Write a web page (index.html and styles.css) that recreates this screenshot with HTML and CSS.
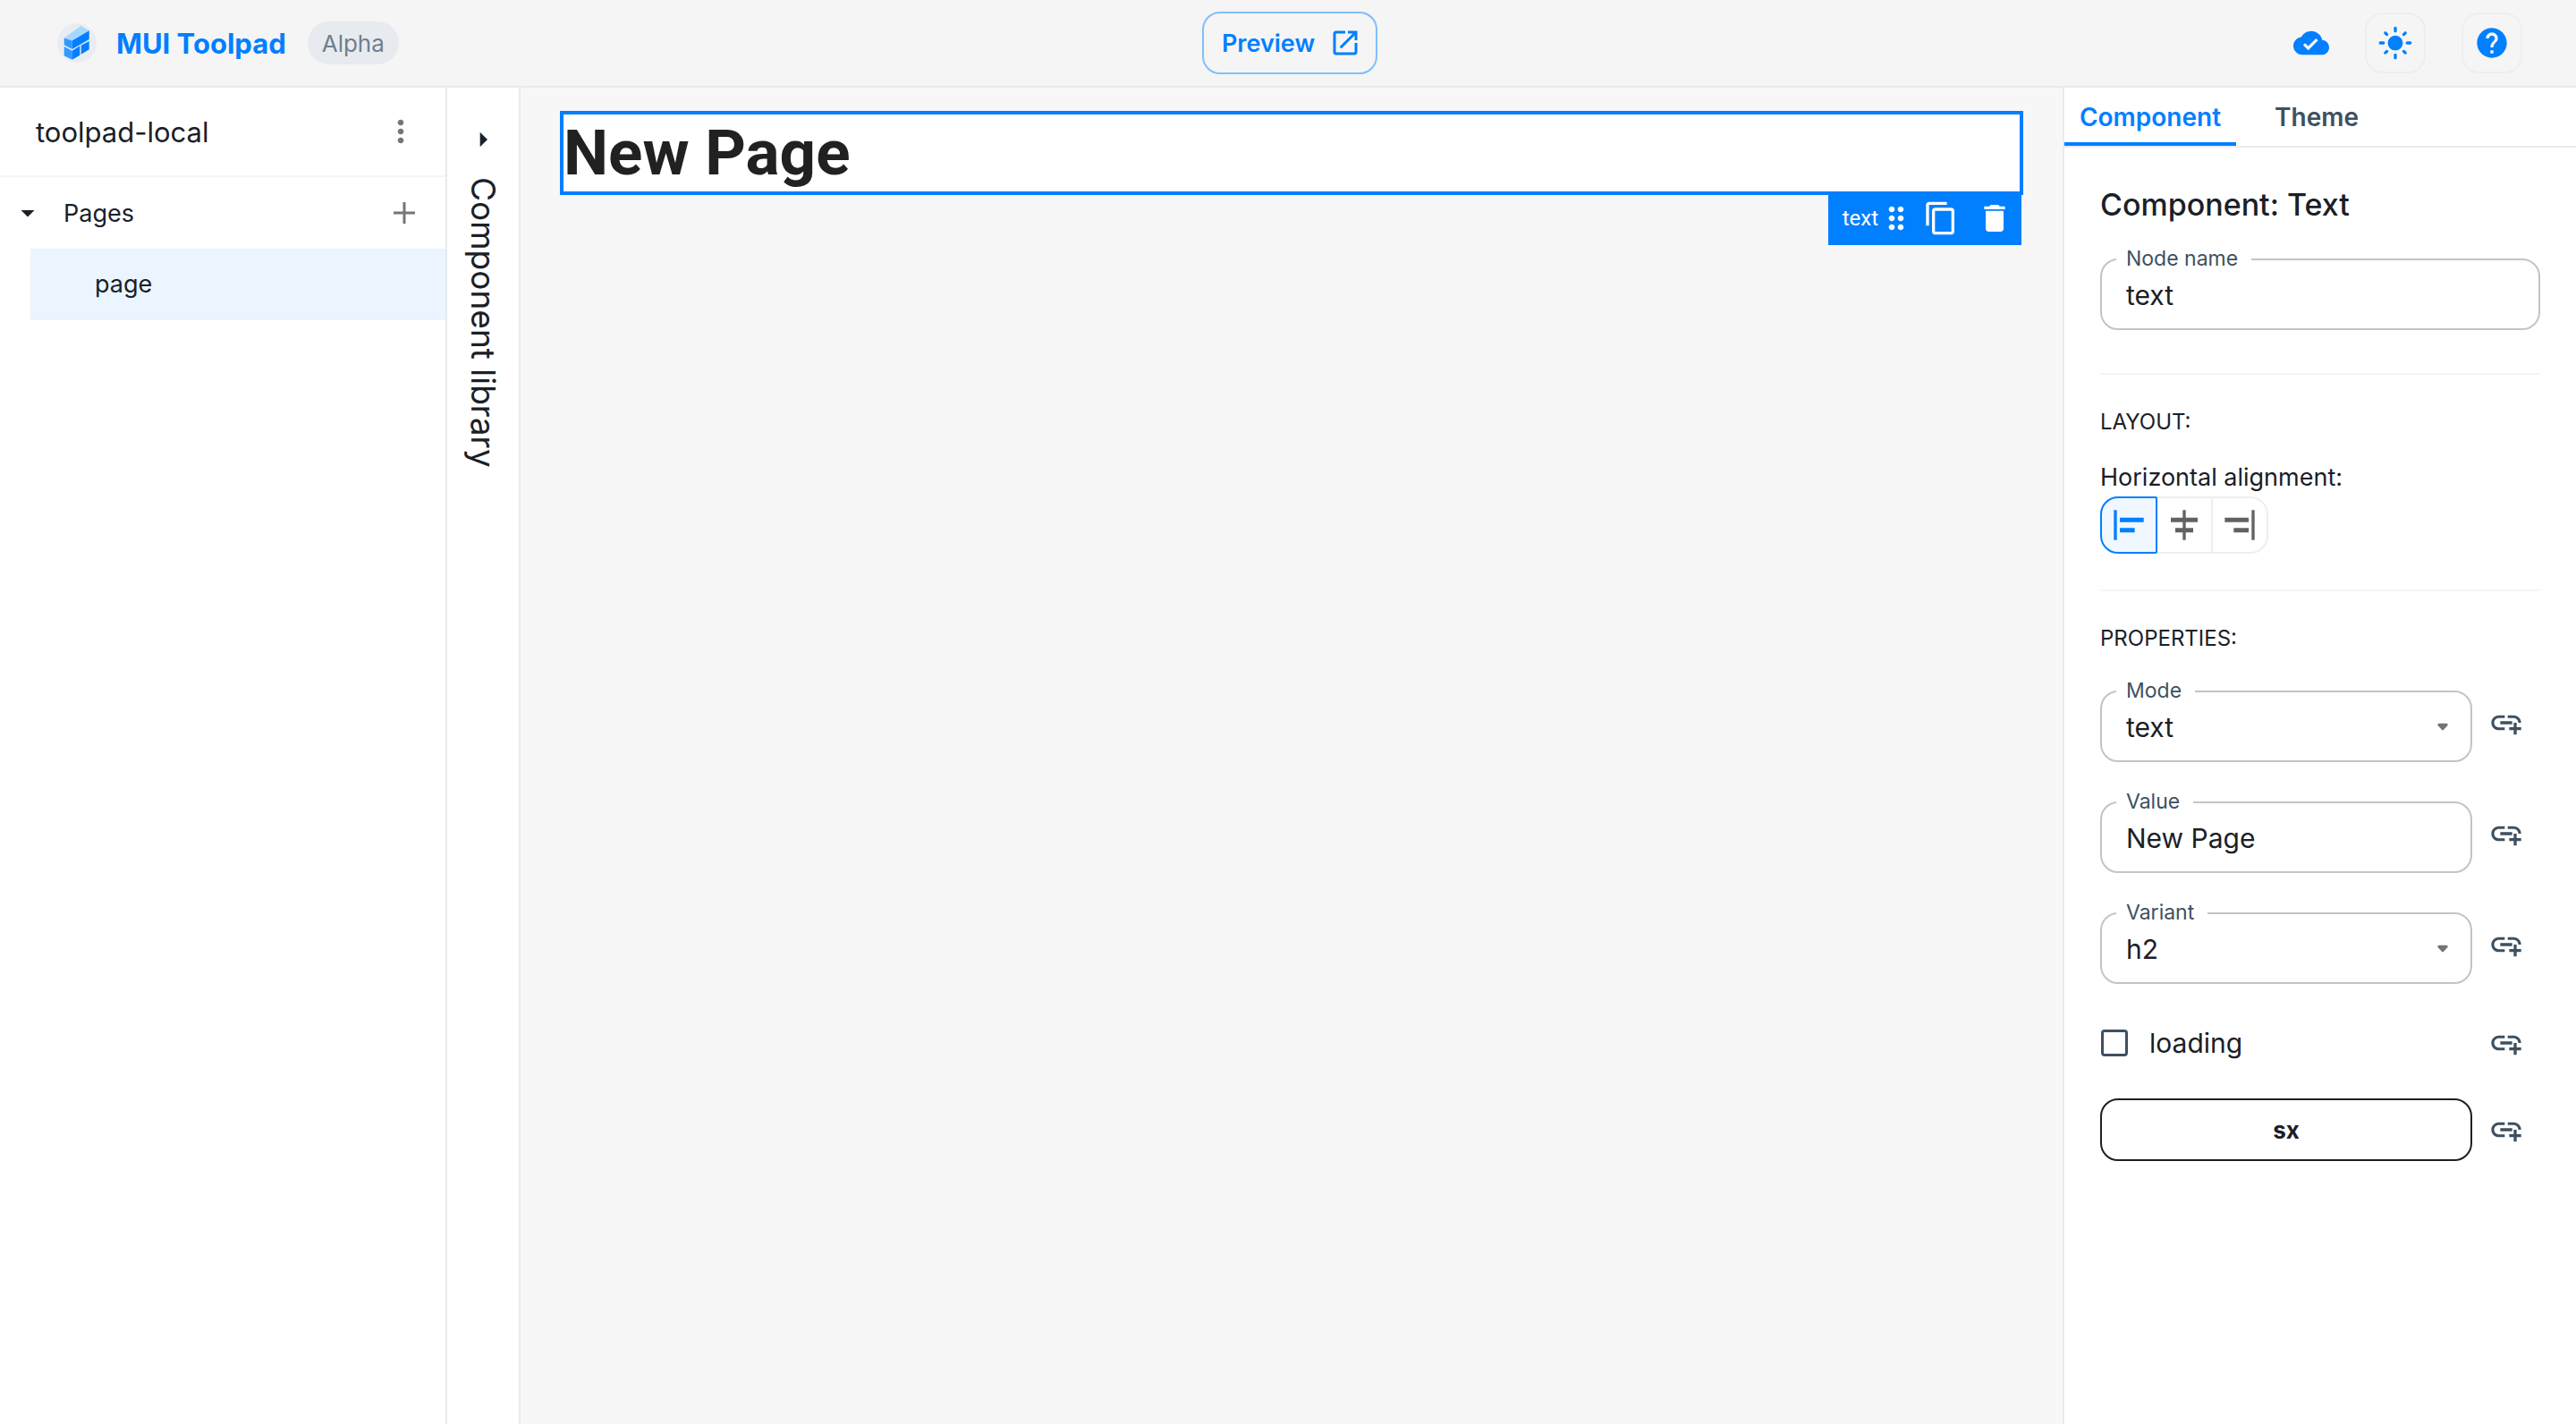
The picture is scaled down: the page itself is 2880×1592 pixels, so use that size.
FILE: index.html
```html
<!DOCTYPE html>
<html lang="en">
<head>
<meta charset="utf-8">
<title>MUI Toolpad</title>
<link rel="stylesheet" href="styles.css">
</head>
<body>
<svg class="sprite" aria-hidden="true">
  <symbol id="add-link" viewBox="0 0 24 24"><path d="M8 11h8v2H8v-2zm12.1 1H22c0-2.76-2.24-5-5-5h-4v1.9h4c1.71 0 3.1 1.39 3.1 3.1zM3.9 12c0-1.71 1.39-3.1 3.1-3.1h4V7H7c-2.76 0-5 2.24-5 5s2.24 5 5 5h4v-1.9H7c-1.71 0-3.1-1.39-3.1-3.1zM19 12h-2v3h-3v2h3v3h2v-3h3v-2h-3v-3z"/></symbol>
</svg>
<header class="topbar">
  <div class="brand">
    <svg class="logo" viewBox="0 0 44 44" aria-hidden="true">
      <circle cx="22" cy="22" r="22" fill="#e9edf3"/>
      <path d="M7.700 16.500 26.300 3l9.400 5.200-19 11.300z" fill="#a5d8ff"/>
      <path d="M7.700 16.500l9 3V29l-9-4.700zM7.700 26l9 4.700v10l-9-4.400z" fill="#3399ff"/>
      <path d="M16.700 19.500l19-11.300V18l-19 11zM16.700 30.700l8.600-5.400v10.400l-8.600 5zM26.700 24.700l9-4.700v9.300l-9 5.400z" fill="#007fff"/>
    </svg>
    <span class="brand-name">MUI Toolpad</span>
    <span class="chip">Alpha</span>
  </div>
  <button class="preview" type="button">Preview
    <svg class="icon-md" viewBox="0 0 24 24"><path d="M19 19H5V5h7V3H5c-1.11 0-2 .9-2 2v14c0 1.1.89 2 2 2h14c1.1 0 2-.9 2-2v-7h-2v7zM14 3v2h3.59l-9.83 9.83 1.41 1.41L19 6.41V10h2V3h-7z"/></svg>
  </button>
  <div class="actions">
    <svg class="icon" viewBox="0 0 24 24"><path d="M19.35 10.04C18.67 6.59 15.64 4 12 4 9.11 4 6.6 5.64 5.35 8.04 2.34 8.36 0 10.91 0 14c0 3.31 2.69 6 6 6h13c2.76 0 5-2.24 5-5 0-2.64-2.05-4.78-4.65-4.96zM10 17l-3.5-3.5 1.41-1.41L10 14.17 15.18 9l1.41 1.41L10 17z"/></svg>
    <button class="square" type="button" aria-label="Toggle theme"><svg class="icon" viewBox="0 0 24 24"><path d="M12 7c-2.76 0-5 2.24-5 5s2.24 5 5 5 5-2.24 5-5-2.24-5-5-5zM2 13h2c.55 0 1-.45 1-1s-.45-1-1-1H2c-.55 0-1 .45-1 1s.45 1 1 1zm18 0h2c.55 0 1-.45 1-1s-.45-1-1-1h-2c-.55 0-1 .45-1 1s.45 1 1 1zM11 2v2c0 .55.45 1 1 1s1-.45 1-1V2c0-.55-.45-1-1-1s-1 .45-1 1zm0 18v2c0 .55.45 1 1 1s1-.45 1-1v-2c0-.55-.45-1-1-1s-1 .45-1 1zM5.99 4.58a.996.996 0 0 0-1.41 0 .996.996 0 0 0 0 1.41l1.06 1.06c.39.39 1.03.39 1.41 0s.39-1.03 0-1.41L5.99 4.58zm12.37 12.37a.996.996 0 0 0-1.41 0 .996.996 0 0 0 0 1.41l1.06 1.06c.39.39 1.03.39 1.41 0a.996.996 0 0 0 0-1.41l-1.06-1.06zm1.06-10.96a.996.996 0 0 0 0-1.41.996.996 0 0 0-1.41 0l-1.06 1.06c-.39.39-.39 1.03 0 1.41s1.03.39 1.41 0l1.06-1.06zM7.05 18.36a.996.996 0 0 0 0-1.41.996.996 0 0 0-1.41 0l-1.06 1.06c-.39.39-.39 1.03 0 1.41s1.03.39 1.41 0l1.06-1.06z"/></svg></button>
    <button class="square" type="button" aria-label="Help"><svg class="icon" viewBox="0 0 24 24"><path d="M12 2C6.48 2 2 6.48 2 12s4.48 10 10 10 10-4.48 10-10S17.52 2 12 2zm1 17h-2v-2h2v2zm2.07-7.75-.9.92C13.45 12.9 13 13.5 13 15h-2v-.5c0-1.1.45-2.1 1.17-2.83l1.24-1.26c.37-.36.59-.86.59-1.41 0-1.1-.9-2-2-2s-2 .9-2 2H8c0-2.21 1.79-4 4-4s4 1.79 4 4c0 .88-.36 1.68-.93 2.25z"/></svg></button>
  </div>
</header>
<div class="workspace">
  <nav class="sidebar">
    <div class="app-row">
      <span class="app-name">toolpad-local</span>
      <button class="bare" type="button" aria-label="App menu"><svg class="icon" viewBox="0 0 24 24"><path d="M12 8c1.1 0 2-.9 2-2s-.9-2-2-2-2 .9-2 2 .9 2 2 2zm0 2c-1.1 0-2 .9-2 2s.9 2 2 2 2-.9 2-2-.9-2-2-2zm0 6c-1.1 0-2 .9-2 2s.9 2 2 2 2-.9 2-2-.9-2-2-2z"/></svg></button>
    </div>
    <div class="tree-row">
      <svg class="icon-md dark" viewBox="0 0 24 24"><path d="m7 10 5 5 5-5z"/></svg>
      <span class="tree-label">Pages</span>
      <button class="bare" type="button" aria-label="Create page"><svg class="icon-md" viewBox="0 0 24 24"><path d="M20 13h-7v7h-2v-7H4v-2h7V4h2v7h7v2z"/></svg></button>
    </div>
    <a class="tree-item" href="#page">page</a>
  </nav>
  <aside class="library">
    <button class="bare dark" type="button" aria-label="Expand component library"><svg class="icon" viewBox="0 0 24 24"><path d="m10 17 5-5-5-5v10z"/></svg></button>
    <span class="library-title">Component library</span>
  </aside>
  <main class="canvas">
    <div class="node">
      <h2 class="node-text">New Page</h2>
      <div class="hud">
        <span class="hud-name">text</span>
        <svg class="icon" viewBox="0 0 24 24"><path d="M11 18c0 1.1-.9 2-2 2s-2-.9-2-2 .9-2 2-2 2 .9 2 2zm-2-8c-1.1 0-2 .9-2 2s.9 2 2 2 2-.9 2-2-.9-2-2-2zm0-6c-1.1 0-2 .9-2 2s.9 2 2 2 2-.9 2-2-.9-2-2-2zm6 4c1.1 0 2-.9 2-2s-.9-2-2-2-2 .9-2 2 .9 2 2 2zm0 2c-1.1 0-2 .9-2 2s.9 2 2 2 2-.9 2-2-.9-2-2-2zm0 6c-1.1 0-2 .9-2 2s.9 2 2 2 2-.9 2-2-.9-2-2-2z"/></svg>
        <button class="hud-button" type="button" aria-label="Duplicate"><svg class="icon" viewBox="0 0 24 24"><path d="M16 1H4c-1.1 0-2 .9-2 2v14h2V3h12V1zm3 4H8c-1.1 0-2 .9-2 2v14c0 1.1.9 2 2 2h11c1.1 0 2-.9 2-2V7c0-1.1-.9-2-2-2zm0 16H8V7h11v14z"/></svg></button>
        <button class="hud-button" type="button" aria-label="Delete"><svg class="icon" viewBox="0 0 24 24"><path d="M6 19c0 1.1.9 2 2 2h8c1.1 0 2-.9 2-2V7H6v12zM19 4h-3.500l-1-1h-5l-1 1H5v2h14V4z"/></svg></button>
      </div>
    </div>
  </main>
  <aside class="panel">
    <div class="tabs" role="tablist">
      <button class="tab active" type="button" role="tab" aria-selected="true">Component</button>
      <button class="tab" type="button" role="tab" aria-selected="false">Theme</button>
    </div>
    <div class="panel-body">
      <h1 class="panel-title">Component: Text</h1>
      <div class="field">
        <label for="node-name">Node name</label>
        <input id="node-name" type="text" value="text">
      </div>
      <hr>
      <h3 class="overline">LAYOUT:</h3>
      <div class="align-label">Horizontal alignment:</div>
      <div class="toggle-group">
        <button class="toggle selected" type="button" aria-label="Start"><svg class="icon" viewBox="0 0 24 24"><path d="M4 22H2V2h2v20zM22 7H6v3h16V7zm-6 7H6v3h10v-3z"/></svg></button>
        <button class="toggle" type="button" aria-label="Center"><svg class="icon" viewBox="0 0 24 24"><path d="M11 2h2v5h8v3h-8v4h5v3h-5v5h-2v-5H6v-3h5v-4H3V7h8z"/></svg></button>
        <button class="toggle" type="button" aria-label="End"><svg class="icon" viewBox="0 0 24 24"><path d="M20 2h2v20h-2V2zM2 10h16V7H2v3zm6 7h10v-3H8v3z"/></svg></button>
      </div>
      <hr>
      <h3 class="overline">PROPERTIES:</h3>
      <div class="props">
        <div class="prop">
          <div class="field">
            <label for="mode">Mode</label>
            <select id="mode"><option>text</option></select>
            <svg class="arrow" viewBox="0 0 24 24"><path d="M9.200 10.900h5.600L12 13.900z"/></svg>
          </div>
          <button class="bind" type="button" aria-label="Bind mode"><svg class="icon"><use href="#add-link"/></svg></button>
        </div>
        <div class="prop">
          <div class="field">
            <label for="value">Value</label>
            <input id="value" type="text" value="New Page">
          </div>
          <button class="bind" type="button" aria-label="Bind value"><svg class="icon"><use href="#add-link"/></svg></button>
        </div>
        <div class="prop">
          <div class="field">
            <label for="variant">Variant</label>
            <select id="variant"><option>h2</option></select>
            <svg class="arrow" viewBox="0 0 24 24"><path d="M9.200 10.900h5.600L12 13.900z"/></svg>
          </div>
          <button class="bind" type="button" aria-label="Bind variant"><svg class="icon"><use href="#add-link"/></svg></button>
        </div>
        <div class="prop plain">
          <label class="check"><input type="checkbox">loading</label>
          <button class="bind" type="button" aria-label="Bind loading"><svg class="icon"><use href="#add-link"/></svg></button>
        </div>
        <div class="prop plain">
          <button class="sx" type="button">sx</button>
          <button class="bind" type="button" aria-label="Bind sx"><svg class="icon"><use href="#add-link"/></svg></button>
        </div>
      </div>
    </div>
  </aside>
</div>
</body>
</html>
```
FILE: styles.css
```css
* { box-sizing: border-box; }
body {
  margin: 0;
  min-height: 100vh;
  display: flex;
  flex-direction: column;
  font-family: Inter, "Liberation Sans", sans-serif;
  font-size: 31px;
  color: #1a2027;
  background: #fff;
}
button, input, select { font: inherit; color: inherit; }
button {
  margin: 0;
  padding: 0;
  border: 0;
  background: none;
  display: flex;
  align-items: center;
  justify-content: center;
}
svg { display: block; flex: none; fill: currentColor; }
.sprite { position: absolute; width: 0; height: 0; }
.icon { width: 40px; height: 40px; }
.icon-md { width: 36px; height: 36px; }

.topbar {
  display: grid;
  grid-template-columns: 1fr auto 1fr;
  align-items: center;
  height: 98px;
  padding: 0 60px 0 64px;
  background: #f5f5f5;
  border-bottom: 2px solid #e7ebf0;
  color: #007fff;
}
.brand { display: flex; align-items: center; }
.logo { width: 44px; height: 44px; margin-right: 22px; }
.brand-name { font-weight: 700; margin-right: 24px; }
.chip {
  height: 48px;
  line-height: 50px;
  padding: 0 16px;
  border-radius: 24px;
  background: #e7ebf0;
  color: #6f7e8c;
  font-size: 26px;
}
.preview {
  height: 70px;
  padding: 0 16px 0 20px;
  gap: 16px;
  border: 2px solid #80bfff;
  border-radius: 20px;
  font-size: 27px;
  font-weight: 600;
}
.actions { display: flex; align-items: center; justify-content: flex-end; gap: 40px; }
.square { width: 68px; height: 68px; border: 2px solid #eee; border-radius: 20px; }
.actions .square + .square { margin-left: 0; }

.workspace { flex: 1; display: flex; }
.sidebar { width: 500px; flex: none; border-right: 2px solid #e7ebf0; }
.app-row {
  display: flex;
  align-items: center;
  justify-content: space-between;
  height: 100px;
  padding: 0 30px 0 40px;
  border-bottom: 2px solid #f5f5f5;
}
.bare { color: #757575; }
.dark { color: #1a2027; }
.tree-row {
  display: flex;
  align-items: center;
  height: 80px;
  padding: 0 28px 0 13px;
  font-size: 27px;
}
.tree-label { flex: 1; margin-left: 22px; }
.tree-item {
  display: block;
  height: 80px;
  line-height: 80px;
  margin-left: 34px;
  padding-left: 72px;
  background: #ebf5ff;
  font-size: 27px;
  color: inherit;
  text-decoration: none;
}

.library {
  width: 82px;
  flex: none;
  display: flex;
  flex-direction: column;
  align-items: center;
  padding-top: 38px;
  gap: 22px;
  border-right: 2px solid #e7ebf0;
}
.library-title { writing-mode: vertical-rl; font-size: 37px; line-height: 48px; }

.canvas { flex: 1; padding: 26px 44px; background: #f7f7f7; }
.node { position: relative; border: 4px solid #007fff; background: #fff; }
.node-text {
  margin: 0;
  font: 700 71px/86px Roboto, sans-serif;
  color: #212121;
}
.hud {
  position: absolute;
  right: -2px;
  top: 86px;
  height: 60px;
  display: flex;
  align-items: center;
  padding: 0 10px 0 16px;
  background: #007fff;
  color: #fff;
}
.hud-name { font-size: 24px; line-height: 32px; font-family: Roboto, sans-serif; }
.hud-button { margin-left: 10px; }
.hud-button + .hud-button { margin-left: 20px; }

.panel { width: 574px; flex: none; border-left: 2px solid #e7ebf0; }
.tabs { display: flex; height: 67px; border-bottom: 2px solid #e7ebf0; }
.tab {
  min-width: 180px;
  height: 65px;
  padding: 4px 16px 0;
  border-bottom: 4px solid transparent;
  font-size: 28px;
  font-weight: 600;
  color: #3e5060;
}
.tab.active { min-width: 192px; color: #007fff; border-color: #007fff; }
.panel-body { padding: 40px; }
.panel-title { margin: 0 0 36px; font-size: 34px; font-weight: 500; line-height: 48px; }
.field {
  position: relative;
  flex: 1;
  height: 80px;
  border: 2px solid #c4c4c4;
  border-radius: 20px;
}
.field label {
  position: absolute;
  left: 16px;
  top: -16px;
  padding: 0 15px 0 11px;
  background: #fff;
  color: #3e5060;
  font-size: 23px;
  line-height: 28px;
}
.field input, .field select {
  width: 100%;
  height: 76px;
  margin: 0;
  padding: 2px 27px 0;
  border: 0;
  background: none;
  appearance: none;
  outline: 0;
  font-size: 30px;
}
.arrow {
  position: absolute;
  right: 13px;
  top: 20px;
  width: 36px;
  height: 36px;
  fill: #757575;
  stroke: #757575;
  stroke-width: 2;
  stroke-linejoin: round;
  pointer-events: none;
}
hr { margin: 0; border: 0; border-top: 2px solid #f5f5f5; }
.field + hr { margin-top: 48px; }
.overline { margin: 37px 0 0; font-size: 24px; font-weight: 400; line-height: 32px; }
.align-label { margin: 28px 0 3px; font-size: 27px; line-height: 36px; }
.toggle-group { display: flex; margin: 0 0 40px; }
.toggle { width: 62px; height: 64px; border: 2px solid #eee; border-left: 0; color: #616161; }
.toggle.selected {
  width: 64px;
  border: 2px solid #007fff;
  border-radius: 20px 2px 2px 20px;
  background: #f0f7ff;
  color: #007fff;
}
.toggle:last-child { border-radius: 0 20px 20px 0; }
.props { display: flex; flex-direction: column; margin-top: 42px; }
.prop { display: flex; align-items: center; gap: 18px; margin-bottom: 44px; }
.bind { width: 40px; margin: 0 18px 8px 0; color: #3e5060; }
.plain .bind { margin-bottom: 0; }
.plain { margin-bottom: 40px; }
.check { flex: 1; display: flex; align-items: center; gap: 24px; font-size: 30px; line-height: 44px; }
.check input {
  appearance: none;
  width: 30px;
  height: 30px;
  margin: 0 0 0 1px;
  border: 3px solid #3e5060;
  border-radius: 4px;
}
.sx { flex: 1; height: 70px; border: 2px solid #1a2027; border-radius: 20px; font-size: 26px; font-weight: 700; }
```
